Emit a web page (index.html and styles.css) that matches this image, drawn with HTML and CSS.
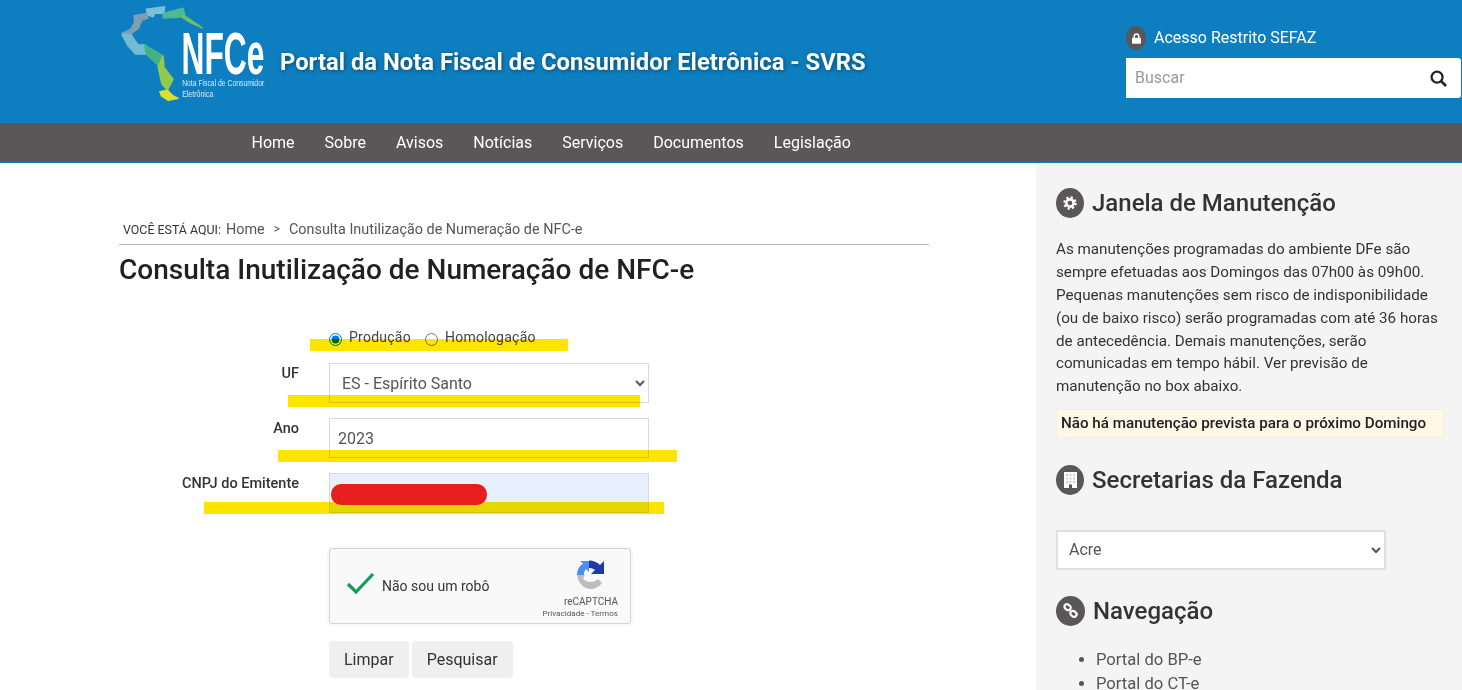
FILE: index.html
```html
<!DOCTYPE html>
<html lang="pt-BR">
<head>
    <meta charset="UTF-8">
    <title>Consulta Inutilização de Numeração de NFC-e</title>
    <link rel="stylesheet" href="styles.css">
</head>
<body>
    <header class="topbar">
        <a class="logo" href="#">
            <svg class="logo-svg" viewBox="60 15 440 290" width="147" height="97">
                <g class="map" transform="translate(54 12)">
                    <polygon fill="#7cc0d8" stroke="#7cc0d8" points="85,15 140,8 137,28 110,28 105,38 88,32"/>
                    <polygon fill="#4fb890" stroke="#4fb890" points="135,28 195,12 200,35 180,40 135,42"/>
                    <polygon fill="#6cc06a" stroke="#6cc06a" points="190,38 200,35 253,72 215,55"/>
                    <polygon fill="#7f9fb0" stroke="#7f9fb0" points="48,35 85,28 90,42 72,48 62,72 40,88 15,97 12,88 38,75 50,55"/>
                    <polygon fill="#72bcd6" stroke="#72bcd6" points="12,92 38,90 60,122 80,122 85,150 52,150 30,125"/>
                    <polygon fill="#45b184" stroke="#45b184" points="80,122 135,155 125,188 85,150"/>
                    <polygon fill="#93c94f" stroke="#93c94f" points="135,155 138,190 165,225 148,258 132,240 128,225 120,188"/>
                    <polygon fill="#dbe02c" stroke="#dbe02c" points="125,262 148,258 165,275 180,282 150,288 130,275"/>
                </g>
                <text class="logo-big" transform="translate(244 222) scale(0.54 1)">NFCe</text>
                <text class="logo-small" transform="translate(246 257) scale(0.728 1)">Nota Fiscal de Consumidor</text>
                <text class="logo-small" transform="translate(246 291) scale(0.75 1)">Eletrônica</text>
            </svg>
        </a>
        <div class="site-title">Portal da Nota Fiscal de Consumidor Eletrônica - SVRS</div>
        <div class="top-right">
            <div class="restricted">
                <span class="badge badge-small">
                    <svg viewBox="0 0 12 14" width="9" height="11"><path fill="#fff" d="M1 6h1V4a4 4 0 0 1 8 0v2h1a1 1 0 0 1 1 1v6a1 1 0 0 1-1 1H1a1 1 0 0 1-1-1V7a1 1 0 0 1 1-1zm3 0h4V4a2 2 0 0 0-4 0z"/></svg>
                </span>
                <a href="#">Acesso Restrito SEFAZ</a>
            </div>
            <div class="search">
                <input type="text" placeholder="Buscar">
                <svg viewBox="0 0 18 18" width="17" height="17"><circle cx="7.5" cy="7.5" r="5.8" fill="none" stroke="#222" stroke-width="2.4"/><path d="M12 12l5 5" stroke="#222" stroke-width="2.8"/></svg>
            </div>
        </div>
    </header>

    <nav class="navbar">
        <a href="#">Home</a>
        <a href="#">Sobre</a>
        <a href="#">Avisos</a>
        <a href="#">Notícias</a>
        <a href="#">Serviços</a>
        <a href="#">Documentos</a>
        <a href="#">Legislação</a>
    </nav>

    <div class="page">
        <main class="content">
            <div class="breadcrumb">
                <span class="here">VOCÊ ESTÁ AQUI:</span>
                <a href="#">Home</a>
                <span class="sep">&gt;</span>
                <a href="#">Consulta Inutilização de Numeração de NFC-e</a>
            </div>
            <h1>Consulta Inutilização de Numeração de NFC-e</h1>

            <form class="form">
                <div class="radios">
                    <label><input type="radio" name="amb" checked> Produção</label>
                    <label><input type="radio" name="amb"> Homologação</label>
                </div>
                <div class="form-row">
                    <label>UF</label>
                    <select class="field"><option>ES - Espírito Santo</option></select>
                </div>
                <div class="form-row">
                    <label>Ano</label>
                    <input class="field" type="text" value="2023">
                </div>
                <div class="form-row">
                    <label>CNPJ do Emitente</label>
                    <input class="field autofilled" type="text">
                </div>

                <div class="captcha">
                    <svg class="check" viewBox="0 0 30 24" width="30" height="24"><path d="M2 13l8 8L27 3" fill="none" stroke="#0f9d58" stroke-width="3.2"/></svg>
                    <span class="captcha-text">Não sou um robô</span>
                    <div class="captcha-brand">
                        <svg viewBox="0 0 30 30" width="30" height="30">
                            <path fill="#4a90f0" d="M1 15A14 14 0 0 1 7 3.500L4 1h9v11l-3-3a7 7 0 0 0-2 6z"/>
                            <path fill="#1c3aa9" d="M13 .5c4 0 8 1.500 11 4.500l4-4v13H15l4-4c-2-1.500-4-2-6-2z"/>
                            <path fill="#bdbdbd" d="M1 15h8l-2 3.500c2 2.500 5 3.500 8 3.500s5-1 7-3l4 4c-3 4-7 6-11 6C8 29 2 23 1 15z"/>
                        </svg>
                        <div class="captcha-name">reCAPTCHA</div>
                        <div class="captcha-links">Privacidade - Termos</div>
                    </div>
                </div>

                <div class="buttons">
                    <button type="button">Limpar</button>
                    <button type="button">Pesquisar</button>
                </div>
            </form>

            <!-- marcações feitas por cima da captura -->
            <span class="mark mark-radios"></span>
            <span class="mark mark-uf"></span>
            <span class="mark mark-ano"></span>
            <span class="mark mark-cnpj"></span>
            <span class="redacted"></span>
        </main>

        <aside class="sidebar">
            <h2 class="side-title">
                <span class="badge">
                    <svg viewBox="0 0 16 16" width="14" height="14"><circle cx="8" cy="8" r="4.200" fill="none" stroke="#fff" stroke-width="3"/><circle cx="8" cy="8" r="6.500" fill="none" stroke="#fff" stroke-width="2.400" stroke-dasharray="2.550 2.550"/></svg>
                </span>
                Janela de Manutenção
            </h2>
            <p class="side-text">As manutenções programadas do ambiente DFe são sempre efetuadas aos Domingos das 07h00 às 09h00. Pequenas manutenções sem risco de indisponibilidade (ou de baixo risco) serão programadas com até 36 horas de antecedência. Demais manutenções, serão comunicadas em tempo hábil. Ver previsão de manutenção no box abaixo.</p>
            <div class="notice">Não há manutenção prevista para o próximo Domingo</div>

            <h2 class="side-title side-title-sefaz">
                <span class="badge">
                    <svg viewBox="0 0 13 16" width="13" height="16"><path fill="#fff" d="M0 0h13v16H0z"/><path fill="#c3cfe0" d="M2 2h2v2H2zM5.500 2h2v2h-2zM9 2h2v2H9zM2 5.500h2v2H2zM5.500 5.500h2v2h-2zM9 5.500h2v2H9zM2 9h2v2H2zM5.500 9h2v2h-2zM9 9h2v2H9z"/><path fill="#4a5560" d="M5 12.500h3V16H5z"/></svg>
                </span>
                Secretarias da Fazenda
            </h2>
            <select class="field side-select"><option>Acre</option></select>

            <h2 class="side-title side-title-nav">
                <span class="badge badge-wide">
                    <svg viewBox="0 0 18 18" width="15" height="15"><g fill="none" stroke="#fff" stroke-width="2.600"><rect x="1.500" y="2" width="8" height="6" rx="3" transform="rotate(40 5.500 5)"/><rect x="8.500" y="10" width="8" height="6" rx="3" transform="rotate(40 12.500 13)"/></g></svg>
                </span>
                Navegação
            </h2>
            <ul class="side-links">
                <li><a href="#">Portal do BP-e</a></li>
                <li><a href="#">Portal do CT-e</a></li>
            </ul>
        </aside>
    </div>
</body>
</html>
```

FILE: styles.css
```css
html, body {
    height: 100%;
    overflow: hidden;
}
body {
    font-family: Roboto, "Liberation Sans", sans-serif;
    margin: 0;
    padding: 0;
    background-color: #fff;
    color: #212121;
    display: flex;
    flex-direction: column;
}
a {
    color: inherit;
    text-decoration: none;
}
.topbar {
    background-color: #0d7fc1;
    height: 123px;
    flex: none;
    display: flex;
    align-items: flex-start;
    padding-left: 120px;
    box-sizing: border-box;
}
.logo {
    display: block;
    margin-top: 5px;
}
.logo-svg {
    display: block;
}
.map polygon {
    stroke-width: 4;
    stroke-linejoin: round;
}
.logo-big {
    fill: #fff;
    font-family: "Liberation Sans", sans-serif;
    font-size: 176px;
    font-weight: 700;
}
.logo-small {
    fill: #d6eaf5;
    font-family: "Liberation Sans", sans-serif;
    font-size: 28px;
}
.site-title {
    color: #fff;
    font-size: 23.8px;
    font-weight: 700;
    margin: 47px 0 0 13px;
    line-height: 30px;
    text-shadow: 1px 1px 4px rgba(0, 0, 0, 0.45);
}
.top-right {
    margin-left: auto;
    margin-right: 1px;
    width: 335px;
    padding-top: 26px;
}
.restricted {
    display: flex;
    align-items: center;
    gap: 8px;
    color: #fff;
    font-size: 16px;
    height: 24px;
}
.restricted a {
    margin-bottom: 2px;
}
.badge {
    background-color: #595757;
    border-radius: 50%;
    width: 28px;
    height: 30px;
    flex: none;
    display: inline-flex;
    align-items: center;
    justify-content: center;
}
.badge-small {
    width: 20px;
    height: 24px;
}
.badge-wide {
    width: 29px;
}
.search {
    margin-top: 8px;
    background-color: #fff;
    height: 40px;
    border-radius: 0 3px 3px 0;
    display: flex;
    align-items: center;
    padding: 0 14px 2px 9px;
    box-sizing: border-box;
}
.search svg {
    margin-top: 2px;
}
.search input {
    flex: 1;
    border: 0;
    outline: 0;
    min-width: 0;
    font-family: inherit;
    font-size: 16px;
    padding: 0;
}
.search input::placeholder {
    color: #999;
}
.navbar {
    background-color: #595757;
    border-bottom: 1px solid #0d7fc1;
    height: 40px;
    box-sizing: border-box;
    flex: none;
    display: flex;
    align-items: center;
    padding-left: 236.5px;
}
.navbar a {
    color: #fff;
    font-size: 16px;
    padding: 0 15px;
}
.page {
    flex: 1;
    min-height: 0;
    display: flex;
    justify-content: space-between;
}
.content {
    position: relative;
    width: 810px;
    margin-left: 119px;
}
.breadcrumb {
    margin-top: 57px;
    height: 24px;
    padding-left: 4px;
    border-bottom: 1px solid #bbb;
    font-size: 14.4px;
    color: #555;
    line-height: 19px;
    display: flex;
    gap: 5px;
}
.here {
    font-size: 12.4px;
    color: #333;
}
.sep {
    font-size: 12px;
    margin: 0 4px;
}
h1 {
    font-size: 28px;
    font-weight: 500;
    margin: 9px 0 0;
    line-height: 32px;
}
.form {
    margin-top: 42px;
    font-size: 14.5px;
}
.radios {
    margin-left: 210px;
    display: flex;
    gap: 14px;
    height: 20px;
    color: #444;
    font-size: 14px;
}
.radios label {
    display: flex;
    align-items: flex-start;
    letter-spacing: 0.25px;
    padding-top: 1px;
}
.radios input {
    margin: 4px 7px 0 0;
    width: 13px;
    height: 13px;
}
.form-row {
    display: grid;
    grid-template-columns: 180px 320px;
    column-gap: 30px;
    margin-bottom: 15px;
}
.radios + .form-row {
    margin-top: 15px;
}
.form-row label {
    text-align: right;
    font-weight: 500;
    color: #333;
    padding-top: 2px;
}
.field {
    box-sizing: border-box;
    height: 40px;
    width: 100%;
    border: 1px solid #d9d9d9;
    background-color: #fff;
    color: #555;
    font-family: inherit;
    font-size: 16px;
    padding: 0 8px;
    border-radius: 0;
    outline: 0;
}
.autofilled {
    background-color: #e8f0fe;
}
.captcha {
    margin: 35px 0 0 210px;
    width: 302px;
    height: 76px;
    box-sizing: border-box;
    background-color: #f9f9f9;
    border: 1px solid #d3d3d3;
    border-radius: 3px;
    box-shadow: 0 0 4px rgba(0, 0, 0, 0.08);
    display: flex;
    align-items: center;
    padding-left: 16px;
    padding-right: 12px;
}
.check {
    flex: none;
    margin-bottom: 6px;
}
.captcha-text {
    margin-left: 6px;
    font-size: 14px;
    color: #333;
}
.captcha-brand {
    margin-left: auto;
    text-align: right;
    padding-top: 6px;
}
.captcha-brand svg {
    display: block;
    margin: 0 12px 5px auto;
}
.captcha-name {
    font-size: 10px;
    color: #555;
    line-height: 13px;
}
.captcha-links {
    font-size: 8.100px;
    color: #555;
    line-height: 11px;
}
.buttons {
    margin: 17px 0 0 210px;
    display: flex;
    gap: 3px;
}
.buttons button {
    height: 37px;
    border: 0;
    border-radius: 4px;
    background-color: #efefef;
    color: #333;
    font-family: inherit;
    font-size: 16px;
    padding: 0 15px;
}
.mark {
    position: absolute;
    height: 12px;
    background-color: #ffe400;
    mix-blend-mode: multiply;
}
.mark-radios {
    left: 191px;
    top: 176px;
    width: 258px;
}
.mark-uf {
    left: 169px;
    top: 232px;
    width: 352px;
}
.mark-ano {
    left: 159px;
    top: 287px;
    width: 399px;
}
.mark-cnpj {
    left: 85px;
    top: 339px;
    width: 460px;
}
.redacted {
    position: absolute;
    left: 212px;
    top: 321px;
    width: 156px;
    height: 21px;
    border-radius: 10px;
    background-color: #e61e1e;
}
.sidebar {
    width: 426px;
    box-sizing: border-box;
    background-color: #f4f4f4;
    padding: 25px 18px 0 20px;
}
.side-title {
    display: flex;
    align-items: center;
    gap: 8px;
    margin: 0;
    font-size: 24px;
    font-weight: 500;
    color: #333;
    line-height: 30px;
}
.side-text {
    font-size: 15.2px;
    line-height: 22.8px;
    color: #333;
    margin: 20.4px 0 0;
}
.notice {
    margin-top: 10.6px;
    height: 29px;
    box-sizing: border-box;
    background-color: #fff8e6;
    border: 1px solid #f3f0e4;
    padding-left: 4px;
    font-size: 15.2px;
    font-weight: 500;
    line-height: 27px;
}
.side-title-sefaz {
    margin-top: 27px;
}
.side-select {
    display: block;
    width: 330px;
    margin-top: 35px;
    padding-left: 7px;
    border: 2px solid #e0e0e0;
}
.side-title-nav {
    margin-top: 26px;
}
.side-links {
    margin: 22px 0 0;
    padding-left: 40px;
    font-size: 16.6px;
    line-height: 24px;
    color: #555;
}
```
